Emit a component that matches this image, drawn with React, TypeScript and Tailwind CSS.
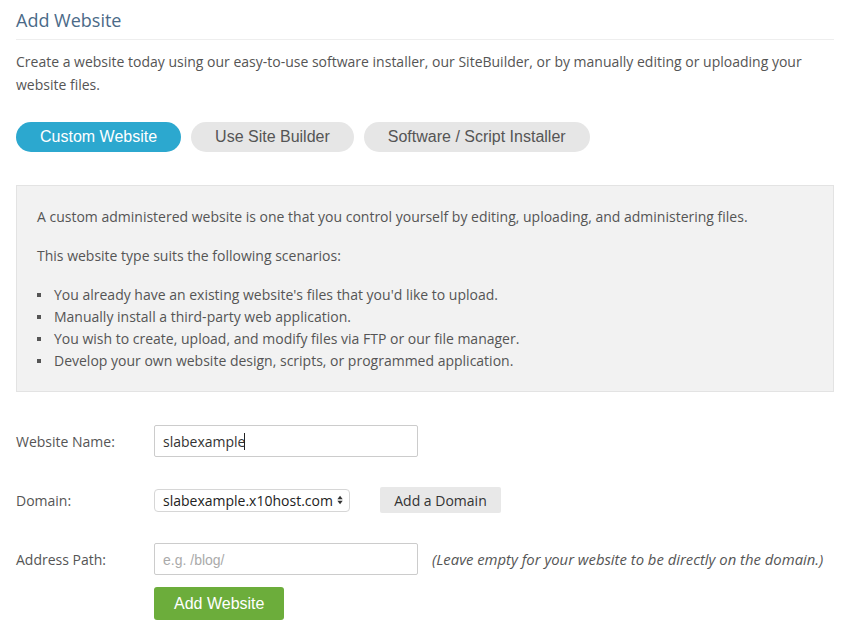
import { useState } from 'react';

const tabs = ['Custom Website', 'Use Site Builder', 'Software / Script Installer'];

const scenarios = [
  "You already have an existing website's files that you'd like to upload.",
  'Manually install a third-party web application.',
  'You wish to create, upload, and modify files via FTP or our file manager.',
  'Develop your own website design, scripts, or programmed application.',
];

export default function App() {
  const [active, setActive] = useState(0);
  const [name, setName] = useState('slabexample');
  const [path, setPath] = useState('');

  return (
    <div className="min-h-screen bg-white pl-4 pr-[22px] font-['Open_Sans',sans-serif] text-[14px] text-[#555]">
      <h1 className="pt-2 pb-[7px] text-[18px] leading-6 font-normal text-[#4b6a88] border-b border-[#eeeeee]">
        Add Website
      </h1>

      <p className="mt-[10px] leading-[23px] text-[#555]">
        Create a website today using our easy-to-use software installer, our SiteBuilder, or by manually editing or uploading your website files.
      </p>

      <div className="mt-[26px] flex gap-[10px]">
        {tabs.map((t, i) => (
          <button
            key={t}
            onClick={() => setActive(i)}
            className={
              i === active
                ? "h-[30px] px-[24px] rounded-full bg-[#2ca8cf] text-white text-[16px] font-['Liberation_Sans',Arial,sans-serif]"
                : "h-[30px] px-[24px] rounded-full bg-[#e6e6e6] text-[#555] text-[16px] font-['Liberation_Sans',Arial,sans-serif]"
            }
          >
            {t}
          </button>
        ))}
      </div>

      <div className="mt-[33px] bg-[#f2f2f2] border border-[#e3e3e3] px-5 pt-[20px] pb-[19px]">
        <p className="leading-[22px] mb-[17px]">
          A custom administered website is one that you control yourself by editing, uploading, and administering files.
        </p>
        <p className="leading-[22px] mb-[17px]">This website type suits the following scenarios:</p>
        <ul>
          {scenarios.map((s) => (
            <li key={s} className="flex items-center leading-[22px]">
              <span className="w-1 h-1 bg-[#555] mr-[13px] shrink-0" />
              {s}
            </li>
          ))}
        </ul>
      </div>

      <div className="mt-[33px] flex items-center">
        <label className="w-[138px] shrink-0">Website Name:</label>
        <div className="relative">
          <input
            value={name}
            onChange={(e) => setName(e.target.value)}
            className="w-[264px] h-[32px] px-2 border border-[#cccccc] rounded-[2px] text-[#333] outline-none"
          />
          {/* caret of the focused field */}
          <span className="absolute left-[90px] top-[8px] w-px h-[17px] bg-[#222]" />
        </div>
      </div>

      <div className="mt-[30px] flex items-center">
        <label className="w-[138px] shrink-0">Domain:</label>
        <div className="w-[196px] h-[23px] pl-2 pr-[6px] border border-[#d6d6d6] rounded-[4px] bg-white flex items-center justify-between text-[#222]">
          <span>slabexample.x10host.com</span>
          <svg width="8" height="12" viewBox="0 0 8 12" className="ml-1">
            <path d="M4 0.5 L7.5 5 H0.5 Z" fill="#333" />
            <path d="M4 11.5 L7.5 7 H0.5 Z" fill="#333" />
          </svg>
        </div>
        <button className="ml-[30px] h-[26px] w-[121px] rounded-[2px] bg-[#e8e8e8] text-[#333]">
          Add a Domain
        </button>
      </div>

      <div className="mt-[30px] flex items-center">
        <label className="w-[138px] shrink-0">Address Path:</label>
        <input
          value={path}
          onChange={(e) => setPath(e.target.value)}
          placeholder="e.g. /blog/"
          className="w-[264px] h-[32px] px-2 border border-[#cccccc] rounded-[2px] text-[#333] placeholder:text-[#aaa] placeholder:font-['Liberation_Sans',Arial,sans-serif] outline-none"
        />
        <span className="ml-[14px] italic text-[14.85px]">(Leave empty for your website to be directly on the domain.)</span>
      </div>

      <div className="mt-3 pl-[138px]">
        <button className="h-[33px] px-5 rounded-[3px] bg-[#6cad3b] text-white text-[16px] font-['Liberation_Sans',Arial,sans-serif]">
          Add Website
        </button>
      </div>
    </div>
  );
}
